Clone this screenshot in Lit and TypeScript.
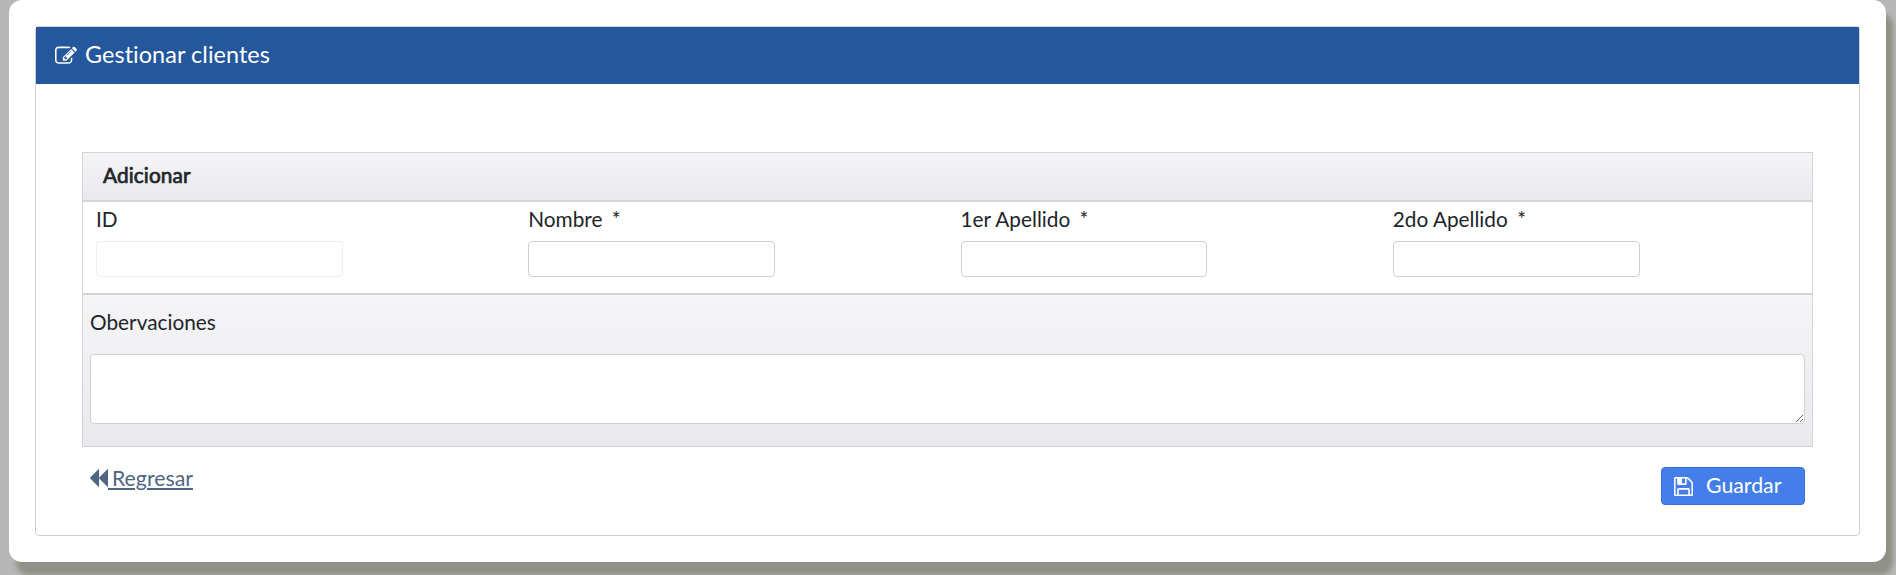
import { LitElement, html, css, svg } from "lit";
import { customElement } from "lit/decorators.js";

const penSquare = svg`<path d="M888 1184l116-116-152-152-116 116v56h96v96h56zM1328 464q-16-16-33 1L945 815q-17 17-1 33t33-1l350-350q17-17 1-33zM1408 1058v190q0 119-84.500 203.500T1120 1536H288q-119 0-203.500-84.500T0 1248V416q0-119 84.500-203.500T288 128h832q63 0 117 25 15 7 18 23 3 17-9 29l-49 49q-14 14-32 8-23-6-45-6H288q-66 0-113 47t-47 113v832q0 66 47 113t113 47h832q66 0 113-47t47-113v-126q0-13 9-22l64-64q15-15 35-7t20 29zM1312 320l288 288-672 672H640V992zM1756 452l-92 92-288-288 92-92q28-28 68-28t68 28l152 152q28 28 28 68t-28 68z"/>`;

const floppy = svg`<path d="M384 1536h768v-384H384v384zM1280 1536h128V640q0-14-10-38.500t-20-34.500L1097 286q-10-10-34-20t-39-10v416q0 40-28 68t-68 28H352q-40 0-68-28t-28-68V256H128v1280h128v-416q0-40 28-68t68-28h832q40 0 68 28t28 68v416zM896 608V288q0-13-9.500-22.500T864 256H672q-13 0-22.500 9.500T640 288v320q0 13 9.500 22.500T672 640h192q13 0 22.500-9.500T896 608zM1536 640v928q0 40-28 68t-68 28H96q-40 0-68-28t-28-68V224q0-40 28-68t68-28h928q40 0 88 20t76 48l280 280q28 28 48 76t20 88z"/>`;

const backward = svg`<path d="M1619 141q19-19 32-13t13 32v1472q0 26-13 32t-32-13L909 941q-9-9-13-19v710q0 26-13 32t-32-13L141 941q-19-19-19-45t19-45L851 141q19-19 32-13t13 32v710q4-10 13-19z"/>`;

@customElement("app-root")
class AppRoot extends LitElement {
  static styles = css`
    :host { display: block; height: 575px; box-sizing: border-box; padding: 0 10px 13px 9px; background: #b7b7b7; overflow: hidden; font: 20.8px/30px Lato, sans-serif; font-variant-ligatures: none; color: #212529; }
    * { box-sizing: border-box; }
    svg { display: block; fill: currentColor; flex: none; }
    .card { height: 562px; padding: 26px; background: #fff; border-radius: 13px; box-shadow: 7px 13px 5px #8f9086; }
    .panel { height: 510px; border: 1px solid #d0d0d2; border-radius: 4px; }
    .title { display: flex; align-items: center; height: 57px; padding: 0 0 3px 19px; gap: 8px; background: #24579b; color: #fff; font-size: 23.4px; letter-spacing: .07px; }
    .title svg { margin-top: 3px; }
    .body { padding: 68px 46px 0; }
    .grid { height: 295px; border: 1px solid #d4d4d5; }
    .head { height: 49px; padding: 7px 20px; letter-spacing: .1px; -webkit-text-stroke: .7px currentColor; background: linear-gradient(#f5f5f8, #e8e9ed); border-bottom: 2px solid #d4d4d5; }
    .fields { display: grid; grid-template-columns: repeat(4, 432.25px); height: 93px; padding: 2px 0 0 13px; border-bottom: 2px solid #d4d4d5; }
    .field label { display: block; height: 37px; }
    .star { margin-left: 4px; }
    input, textarea { display: block; margin: 0; border: 1px solid #d0d0d2; border-radius: 4px; background: #fff; outline: none; font: inherit; }
    input { width: 246.8px; height: 36px; }
    input:disabled { opacity: .35; }
    .notes { height: 151px; padding: 12px 7px 0; background: linear-gradient(#f5f5f8, #e8e9ed); }
    .notes label { display: block; height: 47px; }
    textarea { width: 100%; height: 70px; }
    .actions { display: flex; justify-content: space-between; padding: 0 8px; }
    .back { display: flex; align-items: flex-start; height: 30px; margin-top: 16px; color: #4f6682; text-decoration: none; font-size: 21.3px; }
    .back svg { margin-top: 6px; }
    .back span { text-decoration: underline; white-space: pre; word-spacing: -1.5px; }
    .save { display: flex; align-items: center; width: 144px; height: 38px; margin-top: 20px; padding: 0 0 2px 12px; gap: 13px; border: 1px solid #3b72d8; border-radius: 4px; background: #447eeb; color: #fff; font: 21.3px/30px Lato, sans-serif; }
    .save svg { margin-top: 3px; }
  `;

  field(label: string, required = true) {
    return html`<div class="field"><label>${label}${required ? html` <span class="star">*</span>` : ""}</label><input ?disabled=${!required}></div>`;
  }

  render() {
    return html`<main class="card"><section class="panel">
      <header class="title"><svg width="22" height="22" viewBox="0 0 1792 1792">${penSquare}</svg>Gestionar clientes</header>
      <div class="body">
        <div class="grid">
          <div class="head">Adicionar</div>
          <div class="fields">${this.field("ID", false)}${this.field("Nombre")}${this.field("1er Apellido")}${this.field("2do Apellido")}</div>
          <div class="notes"><label>Obervaciones</label><textarea></textarea></div>
        </div>
        <div class="actions">
          <a class="back" href="#"><svg width="18" height="18" viewBox="122 126 1542 1540" preserveAspectRatio="none">${backward}</svg><span> Regresar</span></a>
          <button class="save"><svg width="19" height="19" viewBox="0 128 1536 1536">${floppy}</svg>Guardar</button>
        </div>
      </div>
    </section></main>`;
  }
}
